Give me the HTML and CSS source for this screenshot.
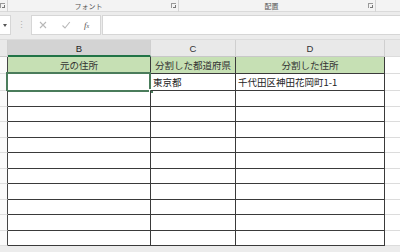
FILE: index.html
```html
<!DOCTYPE html>
<html lang="ja">
<head>
<meta charset="utf-8">
<link rel="stylesheet" href="styles.css">
</head>
<body>
<div class="app">
  <div class="ribbon">
    <div class="group g-left"><span class="launcher"></span></div>
    <div class="group g-font"><span class="glabel">フォント</span><span class="launcher"></span></div>
    <div class="group g-align"><span class="glabel">配置</span><span class="launcher"></span></div>
    <div class="group g-rest"></div>
  </div>
  <div class="fbar">
    <div class="namebox"><span class="caret"></span></div>
    <div class="grip">⋮</div>
    <div class="fbtns">
      <svg class="ic" width="10" height="10" viewBox="0 0 10 10"><path d="M2 2 L8 8 M8 2 L2 8" stroke="#b8b8b8" stroke-width="1.1" fill="none"/></svg>
      <svg class="ic" width="10" height="10" viewBox="0 0 10 10"><path d="M1.5 5.5 L4 8 L8.8 2" stroke="#b8b8b8" stroke-width="1.1" fill="none"/></svg>
      <span class="fx"><i>f</i><span class="x">x</span></span>
    </div>
    <div class="finput"></div>
  </div>
  <div class="sheet">
    <div class="row hdr">
      <div class="c rh corner"></div>
      <div class="c colh sel">B</div>
      <div class="c colh">C</div>
      <div class="c colh">D</div>
      <div class="c colh e"></div>
    </div>
    <div class="row r1">
      <div class="c rh"></div>
      <div class="c b green ctr">元の住所</div>
      <div class="c b green ctr">分割した都道府県</div>
      <div class="c b green ctr">分割した住所</div>
      <div class="c e"></div>
    </div>
    <div class="row r2">
      <div class="c rh"></div>
      <div class="c b active"><span class="handle"></span></div>
      <div class="c b">東京都</div>
      <div class="c b">千代田区神田花岡町1-1</div>
      <div class="c e"></div>
    </div>
    <div class="row"><div class="c rh"></div><div class="c b"></div><div class="c b"></div><div class="c b"></div><div class="c e"></div></div>
    <div class="row"><div class="c rh"></div><div class="c b"></div><div class="c b"></div><div class="c b"></div><div class="c e"></div></div>
    <div class="row"><div class="c rh"></div><div class="c b"></div><div class="c b"></div><div class="c b"></div><div class="c e"></div></div>
    <div class="row"><div class="c rh"></div><div class="c b"></div><div class="c b"></div><div class="c b"></div><div class="c e"></div></div>
    <div class="row"><div class="c rh"></div><div class="c b"></div><div class="c b"></div><div class="c b"></div><div class="c e"></div></div>
    <div class="row"><div class="c rh"></div><div class="c b"></div><div class="c b"></div><div class="c b"></div><div class="c e"></div></div>
    <div class="row"><div class="c rh"></div><div class="c b"></div><div class="c b"></div><div class="c b"></div><div class="c e"></div></div>
    <div class="row"><div class="c rh"></div><div class="c b"></div><div class="c b"></div><div class="c b"></div><div class="c e"></div></div>
    <div class="row"><div class="c rh"></div><div class="c b"></div><div class="c b"></div><div class="c b"></div><div class="c e"></div></div>
    <div class="row"><div class="c rh"></div><div class="c b"></div><div class="c b"></div><div class="c b"></div><div class="c e"></div></div>
  </div>
</div>
</body>
</html>
```

FILE: styles.css
```css
* { box-sizing: border-box; margin: 0; padding: 0; }
html, body { width: 400px; height: 252px; overflow: hidden; background: #ffffff; }
body { font-family: "Noto Sans CJK JP", "Noto Sans", sans-serif; color: #222; }
.app { width: 400px; height: 252px; overflow: hidden; background: #ececec; }

.ribbon { height: 12px; display: flex; background: #f3f3f3; border-bottom: 1px solid #dadada; }
.group { position: relative; height: 12px; border-right: 1px solid #d4d4d4; display: flex; align-items: center; justify-content: center; }
.g-left { width: 8px; }
.g-font { width: 171px; }
.g-align { width: 197px; }
.g-rest { flex: 1; border-right: none; }
.glabel { font-size: 7px; line-height: 12px; color: #555; }
.g-font .glabel { padding-right: 9px; }
.g-align .glabel { padding-right: 11px; }
.launcher { position: absolute; right: 2px; top: 3px; width: 5px; height: 5px; border-left: 1px solid #999; border-top: 1px solid #999; }
.launcher::after { content: ""; position: absolute; right: 0; bottom: 0; width: 2px; height: 2px; border-right: 1px solid #777; border-bottom: 1px solid #777; }

.fbar { height: 27px; display: flex; align-items: flex-start; padding-top: 3px; background: #ececec; }
.namebox { width: 11px; height: 20px; background: #fff; border: 1px solid #d6d6d6; border-left: none; position: relative; }
.caret { position: absolute; left: 3px; top: 8px; width: 0; height: 0; border-left: 2.5px solid transparent; border-right: 2.5px solid transparent; border-top: 3px solid #555; }
.grip { width: 20px; height: 20px; font-size: 9px; line-height: 20px; color: #b0b0b0; text-align: center; }
.fbtns { width: 70px; height: 20px; background: #fff; border: 1px solid #d6d6d6; display: flex; align-items: center; gap: 13px; padding-left: 6px; }
.fx { font-family: "Liberation Serif", serif; font-size: 9px; color: #555; line-height: 10px; }
.fx .x { font-size: 6px; font-style: italic; }
.finput { flex: 1; height: 20px; margin-left: 1px; background: #fff; border: 1px solid #d6d6d6; border-right: none; }

.sheet { background: #fff; }
.row { display: flex; height: 15.5px; }
.row.hdr { height: 18px; background: #e9e9e9; border-top: 1px solid #dcdcdc; }
.row.r1 { height: 17px; }
.row.r2 { height: 17px; }
.c { height: 100%; font-size: 9.5px; line-height: 15px; white-space: nowrap; overflow: visible; position: relative; }
.c:nth-child(1) { width: 8px; }
.c:nth-child(2) { width: 143px; }
.c:nth-child(3) { width: 85px; }
.c:nth-child(4) { width: 149px; }
.c:nth-child(5) { flex: 1; }
.rh { background: #fafafa; border-bottom: 1px solid #dedede; border-right: 1px solid #444; }
.corner { background: #e9e9e9; border-right: 1px solid #d0d0d0; border-bottom: 1px solid #c8c8c8; }
.colh { background: #e9e9e9; border-right: 1px solid #cfcfcf; border-bottom: 1px solid #c8c8c8; color: #333; font-family: "Liberation Sans", sans-serif; font-size: 9.5px; line-height: 17px; text-align: center; }
.colh.sel { background: #d3d3d3; border-bottom: 2px solid #217346; color: #222; }
.colh.e { border-right: none; }
.b { border-right: 1px solid #3a3a3a; border-bottom: 1px solid #3a3a3a; padding-left: 2px; }
.r1 .b, .r2 .b { line-height: 16px; }
.e { border-bottom: 1px solid #dcdcdc; }
.green { background: #c6e0b4; color: #333; }
.ctr { text-align: center; padding-left: 0; }
.active { border-bottom: 1px solid #3a3a3a; }
.active::before { content: ""; position: absolute; left: -2px; top: -2px; right: -1px; bottom: -2px; border: 2px solid #4a7c5b; }
.handle { position: absolute; right: -4px; bottom: -4px; width: 5px; height: 5px; background: #4a7c5b; border: 1px solid #fff; }
```
